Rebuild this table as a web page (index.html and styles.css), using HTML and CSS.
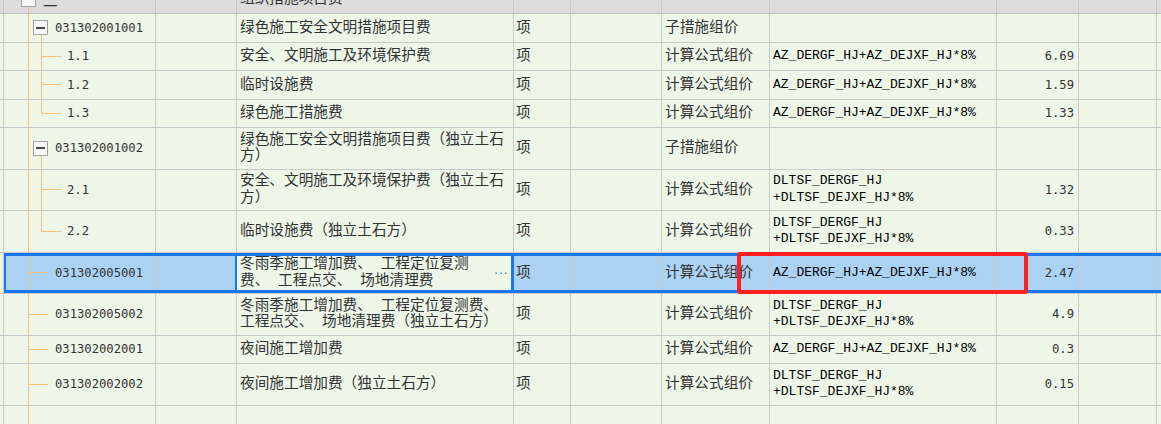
FILE: index.html
```html
<!DOCTYPE html>
<html lang="zh-CN">
<head>
<meta charset="utf-8">
<title>措施项目</title>
<link rel="stylesheet" href="styles.css">
</head>
<body>
<div class="sheet">
  <div class="row group">
    <div class="c c0"></div>
    <div class="c c1 t-top"><span class="box"></span><span class="lvl">二</span></div>
    <div class="c c2"></div>
    <div class="c c3 name">组织措施项目费</div>
    <div class="c c4"></div><div class="c c5"></div><div class="c c6"></div><div class="c c7"></div><div class="c c8"></div><div class="c c9"></div><div class="c c10"></div>
  </div>

  <div class="row">
    <div class="c c0"></div>
    <div class="c c1 t-parent"><span class="box"></span><span class="code">031302001001</span></div>
    <div class="c c2"></div>
    <div class="c c3 name">绿色施工安全文明措施项目费</div>
    <div class="c c4 name">项</div><div class="c c5"></div>
    <div class="c c6 name">子措施组价</div>
    <div class="c c7"></div><div class="c c8"></div><div class="c c9"></div><div class="c c10"></div>
  </div>

  <div class="row">
    <div class="c c0"></div>
    <div class="c c1 t-child"><span class="code">1.1</span></div>
    <div class="c c2"></div>
    <div class="c c3 name">安全、文明施工及环境保护费</div>
    <div class="c c4 name">项</div><div class="c c5"></div>
    <div class="c c6 name">计算公式组价</div>
    <div class="c c7 formula">AZ_DERGF_HJ+AZ_DEJXF_HJ*8%</div>
    <div class="c c8 value">6.69</div><div class="c c9"></div><div class="c c10"></div>
  </div>

  <div class="row">
    <div class="c c0"></div>
    <div class="c c1 t-child"><span class="code">1.2</span></div>
    <div class="c c2"></div>
    <div class="c c3 name">临时设施费</div>
    <div class="c c4 name">项</div><div class="c c5"></div>
    <div class="c c6 name">计算公式组价</div>
    <div class="c c7 formula">AZ_DERGF_HJ+AZ_DEJXF_HJ*8%</div>
    <div class="c c8 value">1.59</div><div class="c c9"></div><div class="c c10"></div>
  </div>

  <div class="row">
    <div class="c c0"></div>
    <div class="c c1 t-last"><span class="code">1.3</span></div>
    <div class="c c2"></div>
    <div class="c c3 name">绿色施工措施费</div>
    <div class="c c4 name">项</div><div class="c c5"></div>
    <div class="c c6 name">计算公式组价</div>
    <div class="c c7 formula">AZ_DERGF_HJ+AZ_DEJXF_HJ*8%</div>
    <div class="c c8 value">1.33</div><div class="c c9"></div><div class="c c10"></div>
  </div>

  <div class="row tall">
    <div class="c c0"></div>
    <div class="c c1 t-parent"><span class="box"></span><span class="code">031302001002</span></div>
    <div class="c c2"></div>
    <div class="c c3 name">绿色施工安全文明措施项目费（独立土石<br>方）</div>
    <div class="c c4 name">项</div><div class="c c5"></div>
    <div class="c c6 name">子措施组价</div>
    <div class="c c7"></div><div class="c c8"></div><div class="c c9"></div><div class="c c10"></div>
  </div>

  <div class="row tall">
    <div class="c c0"></div>
    <div class="c c1 t-child"><span class="code">2.1</span></div>
    <div class="c c2"></div>
    <div class="c c3 name">安全、文明施工及环境保护费（独立土石<br>方）</div>
    <div class="c c4 name">项</div><div class="c c5"></div>
    <div class="c c6 name">计算公式组价</div>
    <div class="c c7 formula">DLTSF_DERGF_HJ<br>+DLTSF_DEJXF_HJ*8%</div>
    <div class="c c8 value">1.32</div><div class="c c9"></div><div class="c c10"></div>
  </div>

  <div class="row tall">
    <div class="c c0"></div>
    <div class="c c1 t-last"><span class="code">2.2</span></div>
    <div class="c c2"></div>
    <div class="c c3 name">临时设施费（独立土石方）</div>
    <div class="c c4 name">项</div><div class="c c5"></div>
    <div class="c c6 name">计算公式组价</div>
    <div class="c c7 formula">DLTSF_DERGF_HJ<br>+DLTSF_DEJXF_HJ*8%</div>
    <div class="c c8 value">0.33</div><div class="c c9"></div><div class="c c10"></div>
  </div>

  <div class="row tall sel">
    <div class="c c0"></div>
    <div class="c c1 t-leaf"><span class="code">031302005001</span></div>
    <div class="c c2"></div>
    <div class="c c3 name edit"><span class="txt">冬雨季施工增加费、 工程定位复测<br>费、 工程点交、 场地清理费</span><span class="more">···</span></div>
    <div class="c c4 name">项</div><div class="c c5"></div>
    <div class="c c6 name">计算公式组价</div>
    <div class="c c7 formula">AZ_DERGF_HJ+AZ_DEJXF_HJ*8%</div>
    <div class="c c8 value">2.47</div><div class="c c9"></div><div class="c c10"></div>
    <div class="mark"></div>
  </div>

  <div class="row tall">
    <div class="c c0"></div>
    <div class="c c1 t-leaf"><span class="code">031302005002</span></div>
    <div class="c c2"></div>
    <div class="c c3 name">冬雨季施工增加费、 工程定位复测费、<br>工程点交、 场地清理费（独立土石方）</div>
    <div class="c c4 name">项</div><div class="c c5"></div>
    <div class="c c6 name">计算公式组价</div>
    <div class="c c7 formula">DLTSF_DERGF_HJ<br>+DLTSF_DEJXF_HJ*8%</div>
    <div class="c c8 value">4.9</div><div class="c c9"></div><div class="c c10"></div>
  </div>

  <div class="row">
    <div class="c c0"></div>
    <div class="c c1 t-leaf"><span class="code">031302002001</span></div>
    <div class="c c2"></div>
    <div class="c c3 name">夜间施工增加费</div>
    <div class="c c4 name">项</div><div class="c c5"></div>
    <div class="c c6 name">计算公式组价</div>
    <div class="c c7 formula">AZ_DERGF_HJ+AZ_DEJXF_HJ*8%</div>
    <div class="c c8 value">0.3</div><div class="c c9"></div><div class="c c10"></div>
  </div>

  <div class="row tall">
    <div class="c c0"></div>
    <div class="c c1 t-leaf"><span class="code">031302002002</span></div>
    <div class="c c2"></div>
    <div class="c c3 name">夜间施工增加费（独立土石方）</div>
    <div class="c c4 name">项</div><div class="c c5"></div>
    <div class="c c6 name">计算公式组价</div>
    <div class="c c7 formula">DLTSF_DERGF_HJ<br>+DLTSF_DEJXF_HJ*8%</div>
    <div class="c c8 value">0.15</div><div class="c c9"></div><div class="c c10"></div>
  </div>

  <div class="row tall">
    <div class="c c0"></div>
    <div class="c c1 t-pass"></div>
    <div class="c c2"></div><div class="c c3"></div><div class="c c4"></div><div class="c c5"></div><div class="c c6"></div><div class="c c7"></div><div class="c c8"></div><div class="c c9"></div><div class="c c10"></div>
  </div>
</div>
</body>
</html>
```

FILE: styles.css
```css
:root {
  --bg: #eef6e8;
  --grid: #c9c9c9;
  --tree: #f8bf76;
  --sel: #abd2f2;
  --blue: #1a76f2;
}

html, body {
  margin: 0;
  padding: 0;
  background: var(--bg);
  overflow: hidden;
  height: 424px;
}

.sheet {
  margin-top: -14.5px;
  color: #333;
}

.row {
  display: grid;
  grid-template-columns: 4px 152px 81px 277px 57px 91px 108px 227px 82px 78px 1fr;
  height: 28.5px;
  box-sizing: border-box;
  border-bottom: 1px solid var(--grid);
  background: var(--bg);
}

.row.tall {
  height: 41.5px;
}

.row.group {
  background: #dcdcdc;
  border-bottom-color: #c4c4c4;
}

.c {
  box-sizing: border-box;
  border-right: 1px solid var(--grid);
  display: flex;
  align-items: center;
  overflow: hidden;
  min-width: 0;
}

.c10 {
  border-right: none;
}

.name {
  font-family: "Liberation Mono", "Noto Sans CJK SC", monospace;
  font-size: 14.67px;
  line-height: 16.5px;
  padding-left: 3px;
  white-space: nowrap;
}

.c4.name {
  padding-left: 2px;
}

.formula {
  font-family: "Liberation Mono", monospace;
  font-size: 13px;
  line-height: 16.5px;
  color: #000;
  padding-left: 3px;
  white-space: nowrap;
}

.value {
  font-family: "DejaVu Sans Mono", monospace;
  font-size: 12.2px;
  justify-content: flex-end;
  padding-right: 4px;
}

.code {
  font-family: "DejaVu Sans Mono", monospace;
  font-size: 12.2px;
  white-space: nowrap;
}

.lvl {
  font-family: "Noto Sans CJK SC", sans-serif;
  font-size: 14.67px;
  margin-left: 7px;
}

/* tree column */
.c1 {
  --v: linear-gradient(var(--tree), var(--tree));
}

.box {
  width: 15px;
  height: 15px;
  flex: none;
  box-sizing: border-box;
  border: 1px solid #a2a2a2;
  background: #f7f7f7;
  display: flex;
  align-items: center;
  justify-content: center;
}

.box::before {
  content: "";
  width: 9px;
  height: 2px;
  background: #4a4a4a;
}

.box + .code {
  margin-left: 7px;
}

.t-top {
  padding-left: 17px;
  background: var(--v) 24px 100% / 1px 50% no-repeat;
}

.t-pass {
  background: var(--v) 24px 0 / 1px 100% no-repeat;
}

.t-parent {
  padding-left: 29px;
  background:
    var(--v) 24px 0 / 1px 100% no-repeat,
    var(--v) 37px 100% / 1px 50% no-repeat;
}

.t-child {
  padding-left: 63px;
  background:
    var(--v) 24px 0 / 1px 100% no-repeat,
    var(--v) 37px 0 / 1px 100% no-repeat,
    var(--v) 37px 50% / 20px 1px no-repeat;
}

.t-last {
  padding-left: 63px;
  background:
    var(--v) 24px 0 / 1px 100% no-repeat,
    var(--v) 37px 0 / 1px 50% no-repeat,
    var(--v) 37px 50% / 20px 1px no-repeat;
}

.t-leaf {
  padding-left: 51px;
  background:
    var(--v) 24px 0 / 1px 100% no-repeat,
    var(--v) 24px 50% / 20px 1px no-repeat;
}

/* selected row */
.row.sel {
  position: relative;
}

.sel .c {
  background-color: var(--sel);
}

.sel .c0 {
  background-color: var(--bg);
}

.sel .c1 {
  background-color: var(--sel);
}

.sel::after {
  content: "";
  position: absolute;
  top: 0;
  bottom: 0;
  left: 4px;
  right: -3px;
  border: solid var(--blue);
  border-width: 3px 2px;
  pointer-events: none;
}

.sel .edit {
  background-color: var(--bg);
  position: relative;
  overflow: visible;
  padding-right: 5px;
}

.edit::after {
  content: "";
  position: absolute;
  top: 0;
  bottom: 0;
  left: -2px;
  right: -1px;
  border-left: 2px solid var(--blue);
  border-right: 3px solid var(--blue);
  z-index: 1;
}

.edit .txt {
  flex: 1;
}

.more {
  font-family: "DejaVu Sans Mono", monospace;
  font-weight: bold;
  font-size: 9px;
  letter-spacing: -0.5px;
  color: #3c8de0;
}

.mark {
  position: absolute;
  left: 737px;
  top: -0.5px;
  width: 291px;
  height: 42px;
  box-sizing: border-box;
  border: 4px solid #ff1f1f;
  border-radius: 3px;
  z-index: 2;
  pointer-events: none;
}
```
